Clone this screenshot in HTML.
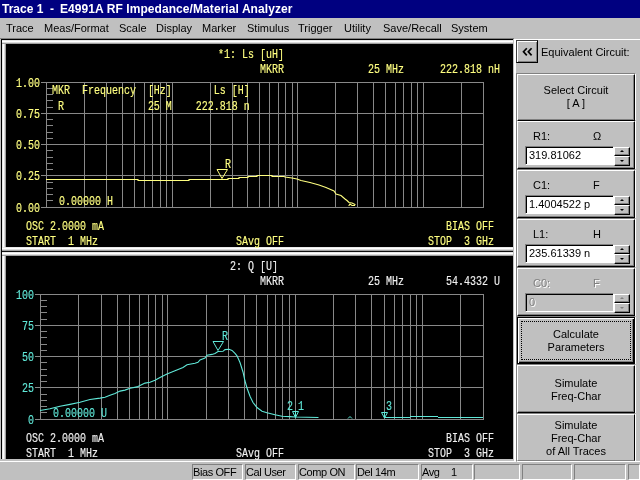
<!DOCTYPE html>
<html><head><meta charset="utf-8"><style>
*{margin:0;padding:0;box-sizing:border-box}
html,body{width:640px;height:480px;overflow:hidden;background:#c0c0c0;position:relative;font-family:"Liberation Sans",sans-serif;font-size:11px;color:#000}
div{position:absolute}
#title{left:0;top:0;width:640px;height:18px;background:#000080;color:#fff;font-weight:bold;font-size:12px}
#title span{position:absolute;top:2px;white-space:pre}
.mi{top:22px;white-space:nowrap;line-height:13px}
#frame{left:1px;top:39px;width:512px;height:421px;background:#000}
.wbh{background:linear-gradient(to bottom,#e8e8e8 0,#e8e8e8 1px,#fff 1px,#fff 2px,#dcdcdc 2px,#dcdcdc 3px,#a0a0a0 3px,#a0a0a0 4px)}
.wbl{background:linear-gradient(to right,#e8e8e8 0,#e8e8e8 1px,#fff 1px,#fff 2px,#dcdcdc 2px,#dcdcdc 3px,#a0a0a0 3px,#a0a0a0 4px)}
svg{position:absolute;left:0;top:0}
.m{font-family:"Liberation Mono",monospace;font-size:10px;white-space:pre;stroke-width:0.12px}
.ui{white-space:nowrap;line-height:13px}
.btn{background:#c0c0c0;border-top:1px solid #fff;border-left:1px solid #fff;border-right:1px solid #000;border-bottom:1px solid #000;box-shadow:inset -1px -1px 0 #808080}
.btn .bt{left:0;right:0;text-align:center;line-height:13px}
.btn.def{left:517px;width:118px;border:1px solid #000;box-shadow:inset 1px 1px 0 #fff, inset -1px -1px 0 #000, inset -2px -2px 0 #808080}
.focus{left:3px;top:3px;width:110px;height:39px;border:1px dotted #000}
.ctr{left:517px;width:118px;text-align:center}
.cell{left:516px;width:120px;border-top:1px solid #808080;border-left:1px solid #808080;border-right:1px solid #fff;border-bottom:1px solid #fff}
.chev{position:absolute;left:4px;top:1px;font-size:16px;font-weight:bold;line-height:18px}
.grp{left:517px;width:118px;height:48px;background:#c0c0c0;border-top:1px solid #fff;border-left:1px solid #fff;border-right:1px solid #000;border-bottom:1px solid #000;box-shadow:inset -1px -1px 0 #808080}
.glbl{left:15px;top:8px;line-height:13px}
.gunit{left:75px;top:8px;line-height:13px}
.inp{left:7px;top:24px;width:89px;height:19px;background:#fff;border-top:1px solid #808080;border-left:1px solid #808080;border-right:1px solid #fff;border-bottom:1px solid #fff;box-shadow:inset 1px 1px 0 #000}
.inp span{position:absolute;left:3px;top:2px;line-height:13px;white-space:pre}
.spin{left:96px;top:25px;width:16px;height:19px}
.su,.sd{left:0;width:16px;height:9px;background:#c0c0c0;border-top:1px solid #fff;border-left:1px solid #fff;border-right:1px solid #000;border-bottom:1px solid #000;box-shadow:inset -1px -1px 0 #808080}
.su{top:0}.sd{top:9px;height:10px}
.up{position:absolute;left:5px;top:2px;width:0;height:0;border-left:2px solid transparent;border-right:2px solid transparent;border-bottom:2px solid #000}
.dn{position:absolute;left:5px;top:3px;width:0;height:0;border-left:2px solid transparent;border-right:2px solid transparent;border-top:2px solid #000}
.dis{color:#808080}
.dis .glbl,.dis .gunit{color:#808080;text-shadow:1px 1px 0 #fff}
.dis .inp{background:#c0c0c0}
.dis .inp span{color:#808080;text-shadow:1px 1px 0 #fff}
.dis .up{border-bottom-color:#808080}.dis .dn{border-top-color:#808080}
.sp{top:464px;height:16px;border-top:1px solid #808080;border-left:1px solid #808080;border-right:1px solid #fff;border-bottom:1px solid #fff}
.sp span{position:absolute;left:0px;top:1px;line-height:13px;white-space:pre;letter-spacing:-0.4px}
</style></head><body>
<div id="root" style="left:0;top:0;width:640px;height:480px;will-change:transform">
<div id="title"><span style="left:2px">Trace 1</span><span style="left:50px">-</span><span style="left:60px;letter-spacing:0.07px">E4991A RF Impedance/Material Analyzer</span></div>
<div class="mi" style="left:6px">Trace</div><div class="mi" style="left:44px">Meas/Format</div><div class="mi" style="left:119px">Scale</div><div class="mi" style="left:156px">Display</div><div class="mi" style="left:202px">Marker</div><div class="mi" style="left:247px">Stimulus</div><div class="mi" style="left:298px">Trigger</div><div class="mi" style="left:344px">Utility</div><div class="mi" style="left:383px">Save/Recall</div><div class="mi" style="left:451px">System</div>
<div style="left:0;top:38px;width:514px;height:1px;background:#808080"></div>
<div id="frame"></div>
<div class="wbl" style="left:2px;top:40px;width:4px;height:419px"></div>
<div class="wbh" style="left:2px;top:40px;width:511px;height:4px"></div>
<div class="wbh" style="left:2px;top:247px;width:511px;height:4px"></div>
<div class="wbh" style="left:2px;top:252px;width:511px;height:4px"></div>
<div style="left:2px;top:251px;width:511px;height:1px;background:#101010"></div>
<div style="left:0;top:459px;width:640px;height:2px;background:#c0c0c0"></div>
<div style="left:0;top:461px;width:640px;height:1px;background:#fff"></div>
<div style="left:514px;top:39px;width:126px;height:1px;background:#fff"></div>
<div style="left:514px;top:39px;width:2px;height:422px;background:#fff"></div>
<div style="left:513px;top:39px;width:1px;height:422px;background:#c0c0c0"></div>
<svg width="640" height="480" viewBox="0 0 640 480">
<path d="M46.5 82 V208 M84.5 82 V208 M106.5 82 V208 M122.5 82 V208 M134.5 82 V208 M144.5 82 V208 M152.5 82 V208 M160.5 82 V208 M166.5 82 V208 M172.5 82 V208 M210.5 82 V208 M232.5 82 V208 M247.5 82 V208 M259.5 82 V208 M269.5 82 V208 M278.5 82 V208 M285.5 82 V208 M292.5 82 V208 M297.5 82 V208 M335.5 82 V208 M357.5 82 V208 M373.5 82 V208 M385.5 82 V208 M395.5 82 V208 M403.5 82 V208 M411.5 82 V208 M417.5 82 V208 M423.5 82 V208 M461.5 82 V208 M483.5 82 V208 M41 82.5 H484 M41 113.5 H484 M41 144.5 H484 M41 175.5 H484 M41 207.5 H484 M46 88.5 H53 M46 94.5 H53 M46 100.5 H53 M46 107.5 H53 M46 119.5 H53 M46 125.5 H53 M46 132.5 H53 M46 138.5 H53 M46 150.5 H53 M46 157.5 H53 M46 163.5 H53 M46 169.5 H53 M46 182.5 H53 M46 188.5 H53 M46 194.5 H53 M46 200.5 H53 " stroke="#888888" stroke-width="1" fill="none" shape-rendering="crispEdges"/>
<path d="M40.5 294 V420 M78.5 294 V420 M101.5 294 V420 M117.5 294 V420 M129.5 294 V420 M139.5 294 V420 M148.5 294 V420 M155.5 294 V420 M162.5 294 V420 M167.5 294 V420 M206.5 294 V420 M228.5 294 V420 M244.5 294 V420 M256.5 294 V420 M267.5 294 V420 M275.5 294 V420 M282.5 294 V420 M289.5 294 V420 M295.5 294 V420 M333.5 294 V420 M355.5 294 V420 M371.5 294 V420 M384.5 294 V420 M394.5 294 V420 M402.5 294 V420 M410.5 294 V420 M416.5 294 V420 M422.5 294 V420 M460.5 294 V420 M483.5 294 V420 M35 294.5 H484 M35 325.5 H484 M35 356.5 H484 M35 387.5 H484 M35 419.5 H484 M40 300.5 H47 M40 306.5 H47 M40 312.5 H47 M40 319.5 H47 M40 331.5 H47 M40 337.5 H47 M40 344.5 H47 M40 350.5 H47 M40 362.5 H47 M40 369.5 H47 M40 375.5 H47 M40 381.5 H47 M40 394.5 H47 M40 400.5 H47 M40 406.5 H47 M40 412.5 H47 " stroke="#888888" stroke-width="1" fill="none" shape-rendering="crispEdges"/>
<text class="m" x="218" y="58" fill="#ffff80" stroke="#ffff80" transform="matrix(1 0 0 1.2 0 -11.600000000000001)">*1:&#160;Ls&#160;[uH]</text>
<text class="m" x="260" y="73" fill="#ffff80" stroke="#ffff80" transform="matrix(1 0 0 1.2 0 -14.600000000000001)">MKRR</text>
<text class="m" x="368" y="73" fill="#ffff80" stroke="#ffff80" transform="matrix(1 0 0 1.2 0 -14.600000000000001)">25&#160;MHz</text>
<text class="m" x="440" y="73" fill="#ffff80" stroke="#ffff80" transform="matrix(1 0 0 1.2 0 -14.600000000000001)">222.818&#160;nH</text>
<text class="m" x="52" y="94" fill="#ffff80" stroke="#ffff80" transform="matrix(1 0 0 1.2 0 -18.8)">MKR&#160;&#160;Frequency&#160;&#160;[Hz]&#160;&#160;&#160;&#160;&#160;&#160;&#160;Ls&#160;[H]</text>
<text class="m" x="52" y="110" fill="#ffff80" stroke="#ffff80" transform="matrix(1 0 0 1.2 0 -22.0)">&#160;R&#160;&#160;&#160;&#160;&#160;&#160;&#160;&#160;&#160;&#160;&#160;&#160;&#160;&#160;25&#160;M&#160;&#160;&#160;&#160;222.818&#160;n</text>
<text class="m" x="16" y="87" fill="#ffff80" stroke="#ffff80" transform="matrix(1 0 0 1.2 0 -17.400000000000002)">1.00</text>
<text class="m" x="16" y="118" fill="#ffff80" stroke="#ffff80" transform="matrix(1 0 0 1.2 0 -23.6)">0.75</text>
<text class="m" x="16" y="149" fill="#ffff80" stroke="#ffff80" transform="matrix(1 0 0 1.2 0 -29.8)">0.50</text>
<text class="m" x="16" y="180" fill="#ffff80" stroke="#ffff80" transform="matrix(1 0 0 1.2 0 -36.0)">0.25</text>
<text class="m" x="16" y="212" fill="#ffff80" stroke="#ffff80" transform="matrix(1 0 0 1.2 0 -42.400000000000006)">0.00</text>
<text class="m" x="59" y="205" fill="#ffff80" stroke="#ffff80" transform="matrix(1 0 0 1.2 0 -41.0)">0.00000&#160;H</text>
<text class="m" x="26" y="230" fill="#ffff80" stroke="#ffff80" transform="matrix(1 0 0 1.2 0 -46.0)">OSC&#160;2.0000&#160;mA</text>
<text class="m" x="26" y="245" fill="#ffff80" stroke="#ffff80" transform="matrix(1 0 0 1.2 0 -49.0)">START&#160;&#160;1&#160;MHz</text>
<text class="m" x="236" y="245" fill="#ffff80" stroke="#ffff80" transform="matrix(1 0 0 1.2 0 -49.0)">SAvg&#160;OFF</text>
<text class="m" x="446" y="230" fill="#ffff80" stroke="#ffff80" transform="matrix(1 0 0 1.2 0 -46.0)">BIAS&#160;OFF</text>
<text class="m" x="428" y="245" fill="#ffff80" stroke="#ffff80" transform="matrix(1 0 0 1.2 0 -49.0)">STOP&#160;&#160;3&#160;GHz</text>
<text class="m" x="224" y="270" fill="#f0f0f0" stroke="#f0f0f0" transform="matrix(1 0 0 1.2 0 -54.0)">&#160;2:&#160;Q&#160;[U]</text>
<text class="m" x="260" y="285" fill="#f0f0f0" stroke="#f0f0f0" transform="matrix(1 0 0 1.2 0 -57.0)">MKRR</text>
<text class="m" x="368" y="285" fill="#f0f0f0" stroke="#f0f0f0" transform="matrix(1 0 0 1.2 0 -57.0)">25&#160;MHz</text>
<text class="m" x="446" y="285" fill="#f0f0f0" stroke="#f0f0f0" transform="matrix(1 0 0 1.2 0 -57.0)">54.4332&#160;U</text>
<text class="m" x="16" y="299" fill="#60e8d8" stroke="#60e8d8" transform="matrix(1 0 0 1.2 0 -59.800000000000004)">100</text>
<text class="m" x="16" y="330" fill="#60e8d8" stroke="#60e8d8" transform="matrix(1 0 0 1.2 0 -66.0)">&#160;75</text>
<text class="m" x="16" y="361" fill="#60e8d8" stroke="#60e8d8" transform="matrix(1 0 0 1.2 0 -72.2)">&#160;50</text>
<text class="m" x="16" y="392" fill="#60e8d8" stroke="#60e8d8" transform="matrix(1 0 0 1.2 0 -78.4)">&#160;25</text>
<text class="m" x="16" y="424" fill="#60e8d8" stroke="#60e8d8" transform="matrix(1 0 0 1.2 0 -84.80000000000001)">&#160;&#160;0</text>
<text class="m" x="53" y="417" fill="#60e8d8" stroke="#60e8d8" transform="matrix(1 0 0 1.2 0 -83.4)">0.00000&#160;U</text>
<text class="m" x="26" y="442" fill="#f0f0f0" stroke="#f0f0f0" transform="matrix(1 0 0 1.2 0 -88.4)">OSC&#160;2.0000&#160;mA</text>
<text class="m" x="26" y="457" fill="#f0f0f0" stroke="#f0f0f0" transform="matrix(1 0 0 1.2 0 -91.4)">START&#160;&#160;1&#160;MHz</text>
<text class="m" x="236" y="457" fill="#f0f0f0" stroke="#f0f0f0" transform="matrix(1 0 0 1.2 0 -91.4)">SAvg&#160;OFF</text>
<text class="m" x="446" y="442" fill="#f0f0f0" stroke="#f0f0f0" transform="matrix(1 0 0 1.2 0 -88.4)">BIAS&#160;OFF</text>
<text class="m" x="428" y="457" fill="#f0f0f0" stroke="#f0f0f0" transform="matrix(1 0 0 1.2 0 -91.4)">STOP&#160;&#160;3&#160;GHz</text>
<polyline points="46,179.5 138,179.5 138,180.5 189,180.5 189,179.5 228,179.5 228,178.5 239,178.5 239,177.5 248,177.5 248,176.5 257,176.5 257,175.5 272,175.5 272,176.5 284,176.5 285,177 292,178 297,179 301,180.5 310,182.5 319,185 326,187.5 334,191 336,194 341,195.5 345,199 347,200.5 349,202.5 352,203 355,204.5 354.5,205.5 352,205.5 350,204 349,205.5 349,206" fill="none" stroke="#ffff80" stroke-width="1.1"/>
<path d="M217 169.5 H227.5 L222 178.5 Z" fill="none" stroke="#ffff80" stroke-width="1"/>
<text class="m" x="225" y="168" fill="#ffff80" stroke="#ffff80" transform="matrix(1 0 0 1.2 0 -33.6)">R</text>
<polyline points="40,410.5 50,408.8 60,406.3 70,404.4 80,402.3 90,399.5 100,398.1 105,397.2 110,395.3 115,393.4 120,391.1 125,390.1 130,388.3 137,386.9 140,385.5 145,383.1 150,382.2 155,380.3 160,377.4 167,374 175,370.8 183,367.5 187,364.7 195,363.3 198,362.3 200,360 205,358.1 207,355.3 212,354.4 215,353.4 218,351.5 223,351.3 225,349.6 229,349.3 232,350.4 235,353.3 237,355.8 240,362.5 243,372 245,381 247,388 250,396.3 253,402.5 257,407.5 262,411.3 267,412.8 275,414.8 282,416.3 290,416.6 295,417 318.5,417.5" fill="none" stroke="#60e8d8" stroke-width="1.1"/>
<path d="M384 417.5 H410 M410 416.5 H438 M438 417.5 H483" stroke="#60e8d8" stroke-width="1" shape-rendering="crispEdges"/>
<path d="M213 341.5 H223.5 L218 350.5 Z" fill="none" stroke="#60e8d8" stroke-width="1"/>
<text class="m" x="222" y="340" fill="#60e8d8" stroke="#60e8d8" transform="matrix(1 0 0 1.2 0 -68.0)">R</text>
<path d="M292.5 411.5 H298.5 L295.5 417.5 Z M295.5 412 V417 M381.5 412.5 H387.5 L384.5 418 Z M384.5 413 V418 M348 418.5 L350 416.5 L352 418.5" fill="none" stroke="#60e8d8" stroke-width="1"/>
<text class="m" x="287" y="410" fill="#60e8d8" stroke="#60e8d8" transform="matrix(1 0 0 1.2 0 -82.0)">2</text>
<text class="m" x="298" y="410" fill="#60e8d8" stroke="#60e8d8" transform="matrix(1 0 0 1.2 0 -82.0)">1</text>
<text class="m" x="386" y="410" fill="#60e8d8" stroke="#60e8d8" transform="matrix(1 0 0 1.2 0 -82.0)">3</text>
</svg>
<div class="cell" style="top:73px;height:49px"></div><div class="cell" style="top:120px;height:50px"></div><div class="cell" style="top:169px;height:50px"></div><div class="cell" style="top:218px;height:50px"></div><div class="cell" style="top:267px;height:50px"></div><div class="cell" style="top:316px;height:49px"></div><div class="cell" style="top:364px;height:50px"></div><div class="cell" style="top:413px;height:49px"></div>
<div class="btn" style="left:516px;top:40px;width:22px;height:23px;border-color:#404040 #000 #000 #404040;box-shadow:inset 1px 1px 0 #fff, inset -1px -1px 0 #808080"><svg width="20" height="21" style="left:0;top:0"><path d="M9.8 7.2 L6.5 10.8 L9.8 14.4 M14.6 7.2 L11.3 10.8 L14.6 14.4" stroke="#000" stroke-width="1.7" fill="none"/></svg></div>
<div class="ui" style="left:541px;top:46px">Equivalent Circuit:</div>
<div class="btn" style="left:517px;top:74px;width:118px;height:47px"></div>
<div class="ui ctr" style="top:84px">Select Circuit</div>
<div class="ui ctr" style="top:97px">[ A ]</div>
<div class="grp" style="top:121px">
<div class="glbl">R1:</div><div class="gunit">&#937;</div>
<div class="inp"><span>319.81062</span></div>
<div class="spin"><div class="su"><i class="up"></i></div><div class="sd"><i class="dn"></i></div></div>
</div><div class="grp" style="top:170px">
<div class="glbl">C1:</div><div class="gunit">F</div>
<div class="inp"><span>1.4004522 p</span></div>
<div class="spin"><div class="su"><i class="up"></i></div><div class="sd"><i class="dn"></i></div></div>
</div><div class="grp" style="top:219px">
<div class="glbl">L1:</div><div class="gunit">H</div>
<div class="inp"><span>235.61339 n</span></div>
<div class="spin"><div class="su"><i class="up"></i></div><div class="sd"><i class="dn"></i></div></div>
</div><div class="grp dis" style="top:268px">
<div class="glbl">C0:</div><div class="gunit">F</div>
<div class="inp"><span>0</span></div>
<div class="spin"><div class="su"><i class="up"></i></div><div class="sd"><i class="dn"></i></div></div>
</div>
<div class="btn def" style="top:317px;height:47px"><div class="focus"></div></div>
<div class="ui ctr" style="top:328px">Calculate</div>
<div class="ui ctr" style="top:341px">Parameters</div>
<div class="btn" style="left:517px;top:365px;width:118px;height:48px"></div>
<div class="ui ctr" style="top:377px">Simulate</div>
<div class="ui ctr" style="top:390px">Freq-Char</div>
<div class="btn" style="left:517px;top:414px;width:118px;height:47px;border-bottom:1px solid #808080;box-shadow:none"></div>
<div class="ui ctr" style="top:419px">Simulate</div>
<div class="ui ctr" style="top:432px">Freq-Char</div>
<div class="ui ctr" style="top:445px">of All Traces</div>
<div class="ui" style="left:451px;top:466px;z-index:2">1</div><div class="sp" style="left:192px;width:51px"><span>Bias&#160;OFF</span></div><div class="sp" style="left:245px;width:51px"><span>Cal&#160;User</span></div><div class="sp" style="left:298px;width:57px"><span>Comp&#160;ON</span></div><div class="sp" style="left:356px;width:63px"><span>Del&#160;14m</span></div><div class="sp" style="left:421px;width:52px"><span>Avg</span></div><div class="sp" style="left:474px;width:46px"><span></span></div><div class="sp" style="left:522px;width:50px"><span></span></div><div class="sp" style="left:574px;width:52px"><span></span></div><div class="sp" style="left:628px;width:12px"><span></span></div>
</div>
</body></html>
